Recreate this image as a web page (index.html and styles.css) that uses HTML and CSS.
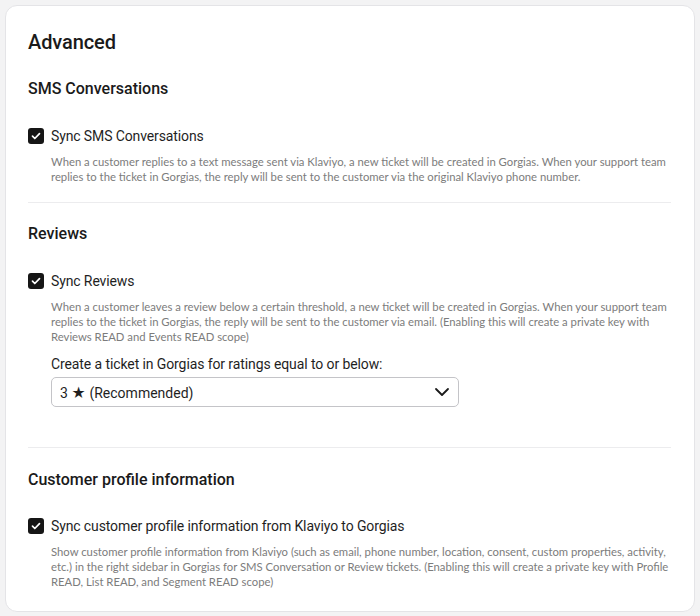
FILE: index.html
```html
<!DOCTYPE html>
<html lang="en">
<head>
<meta charset="utf-8">
<title>Advanced</title>
<link rel="stylesheet" href="styles.css">
</head>
<body>
<div class="card">
  <h1 class="title">Advanced</h1>

  <section class="section">
    <h2 class="section-title">SMS Conversations</h2>
    <label class="check-row">
      <span class="checkbox"><svg viewBox="0 0 16 16" width="16" height="16"><path d="M4.5 8.2l2.3 2.3 4.7-4.9" fill="none" stroke="#fff" stroke-width="1.7" stroke-linecap="round" stroke-linejoin="round"/></svg></span>
      <span class="check-label">Sync SMS Conversations</span>
    </label>
    <p class="desc">When a customer replies to a text message sent via Klaviyo, a new ticket will be created in Gorgias. When your support team replies to the ticket in Gorgias, the reply will be sent to the customer via the original Klaviyo phone number.</p>
  </section>

  <hr class="sep">

  <section class="section">
    <h2 class="section-title">Reviews</h2>
    <label class="check-row">
      <span class="checkbox"><svg viewBox="0 0 16 16" width="16" height="16"><path d="M4.5 8.2l2.3 2.3 4.7-4.9" fill="none" stroke="#fff" stroke-width="1.7" stroke-linecap="round" stroke-linejoin="round"/></svg></span>
      <span class="check-label">Sync Reviews</span>
    </label>
    <p class="desc">When a customer leaves a review below a certain threshold, a new ticket will be created in Gorgias. When your support team replies to the ticket in Gorgias, the reply will be sent to the customer via email. (Enabling this will create a private key with Reviews READ and Events READ scope)</p>
    <div class="field">
      <div class="field-label">Create a ticket in Gorgias for ratings equal to or below:</div>
      <div class="select">
        <span class="select-value">3 ★ (Recommended)</span>
        <svg class="chevron" viewBox="0 0 16 10" width="16" height="10"><path d="M2 2l6 6 6-6" fill="none" stroke="#1a1a1a" stroke-width="1.8" stroke-linecap="round" stroke-linejoin="round"/></svg>
      </div>
    </div>
  </section>

  <hr class="sep sep-lower">

  <section class="section">
    <h2 class="section-title">Customer profile information</h2>
    <label class="check-row check-row-last">
      <span class="checkbox"><svg viewBox="0 0 16 16" width="16" height="16"><path d="M4.5 8.2l2.3 2.3 4.7-4.9" fill="none" stroke="#fff" stroke-width="1.7" stroke-linecap="round" stroke-linejoin="round"/></svg></span>
      <span class="check-label">Sync customer profile information from Klaviyo to Gorgias</span>
    </label>
    <p class="desc">Show customer profile information from Klaviyo (such as email, phone number, location, consent, custom properties, activity, etc.) in the right sidebar in Gorgias for SMS Conversation or Review tickets. (Enabling this will create a private key with Profile READ, List READ, and Segment READ scope)</p>
  </section>
</div>
</body>
</html>
```

FILE: styles.css
```css
* { box-sizing: border-box; }

html, body {
  margin: 0;
  padding: 0;
  background: #f3f3f4;
}

body {
  padding: 5px 5px 0 5px;
  font-family: Roboto, Inter, "Noto Sans", sans-serif;
  color: #1a1a1a;
}

.card {
  background: #ffffff;
  border: 1px solid #e4e4e7;
  border-radius: 12px;
  padding: 22px 23px 22px 22px;
  height: 607px;
}

.title {
  margin: 0;
  font-size: 20px;
  line-height: 28px;
  font-weight: 500;
  letter-spacing: -0.1px;
}

.section-title {
  margin: 0;
  font-size: 16px;
  line-height: 24px;
  font-weight: 500;
}

.title + .section {
  margin-top: 21px;
}

.check-row {
  display: flex;
  align-items: center;
  gap: 7px;
  margin-top: 25px;
  height: 20px;
}

.check-row-last {
  margin-top: 24px;
}

.checkbox {
  width: 16px;
  height: 16px;
  border-radius: 3px;
  background: #161616;
  display: flex;
  flex: none;
}

.check-label {
  font-size: 14px;
  line-height: 20px;
  color: #1f1f1f;
  letter-spacing: -0.12px;
}

.desc {
  margin: 8px 0 0 23px;
  font-family: Lato, "Noto Sans", sans-serif;
  font-size: 11.3px;
  line-height: 15px;
  color: #7c7c7c;
}

.sep {
  border: 0;
  border-top: 1px solid #ececee;
  margin: 18px 0 19px 0;
}

.sep-lower {
  margin-top: 40px;
  margin-bottom: 20px;
}

.field {
  margin: 10px 0 0 23px;
}

.field-label {
  font-size: 14px;
  line-height: 20px;
  color: #1f1f1f;
  letter-spacing: -0.1px;
}

.select {
  margin-top: 3px;
  width: 408px;
  height: 30px;
  border: 1px solid #c4c4c8;
  border-radius: 5px;
  display: flex;
  align-items: center;
  justify-content: space-between;
  padding: 0 8px 0 8px;
}

.select-value {
  font-size: 14px;
  color: #1f1f1f;
}

.chevron {
  display: block;
}
```
